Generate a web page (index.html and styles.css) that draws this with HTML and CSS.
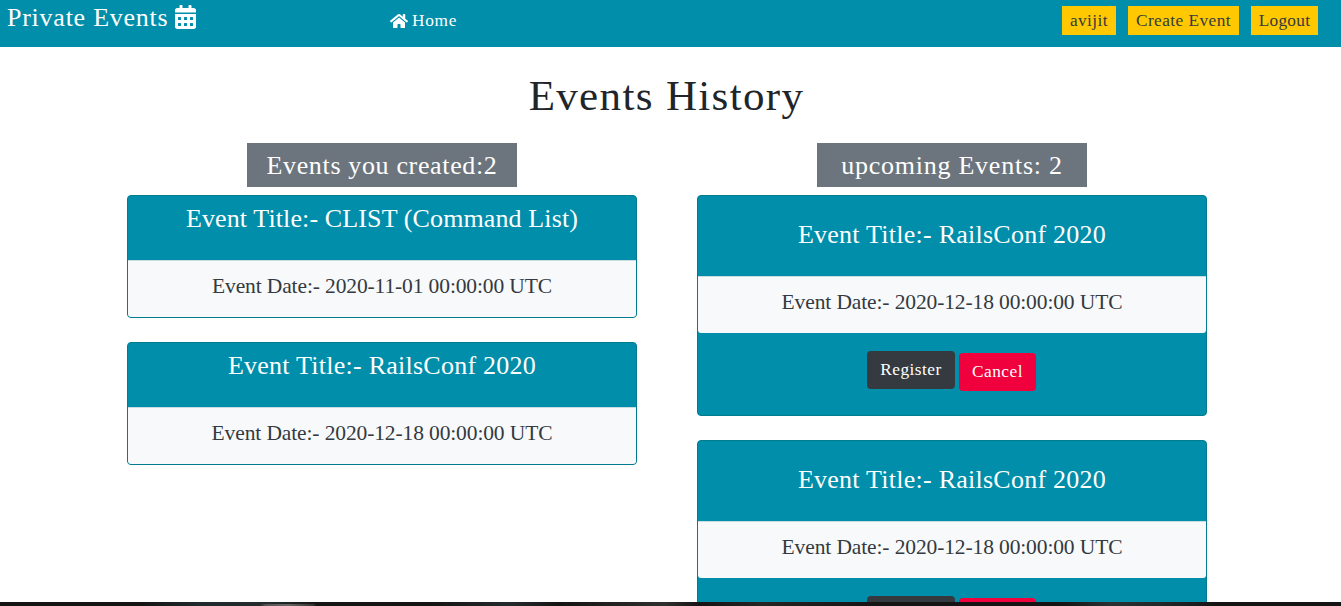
FILE: index.html
```html
<!DOCTYPE html>
<html lang="en">
<head>
<meta charset="utf-8">
<title>Private Events</title>
<link rel="stylesheet" href="styles.css">
</head>
<body>
<header class="navbar">
  <a class="brand"><span>Private Events</span>
    <svg class="calendar" viewBox="0 0 448 512"><path fill="currentColor" d="M0 464c0 26.500 21.500 48 48 48h352c26.500 0 48-21.500 48-48V192H0v272zm320-196c0-6.600 5.400-12 12-12h40c6.600 0 12 5.400 12 12v40c0 6.600-5.400 12-12 12h-40c-6.600 0-12-5.400-12-12v-40zm0 128c0-6.600 5.400-12 12-12h40c6.600 0 12 5.400 12 12v40c0 6.600-5.400 12-12 12h-40c-6.600 0-12-5.400-12-12v-40zM192 268c0-6.600 5.400-12 12-12h40c6.600 0 12 5.400 12 12v40c0 6.600-5.400 12-12 12h-40c-6.600 0-12-5.400-12-12v-40zm0 128c0-6.600 5.400-12 12-12h40c6.600 0 12 5.400 12 12v40c0 6.600-5.400 12-12 12h-40c-6.600 0-12-5.400-12-12v-40zM64 268c0-6.600 5.400-12 12-12h40c6.600 0 12 5.400 12 12v40c0 6.600-5.400 12-12 12H76c-6.600 0-12-5.400-12-12v-40zm0 128c0-6.600 5.400-12 12-12h40c6.600 0 12 5.400 12 12v40c0 6.600-5.400 12-12 12H76c-6.600 0-12-5.400-12-12v-40zM400 64h-48V16c0-8.800-7.200-16-16-16h-32c-8.800 0-16 7.200-16 16v48H160V16c0-8.800-7.200-16-16-16h-32c-8.800 0-16 7.200-16 16v48H48C21.500 64 0 85.500 0 112v48h448v-48c0-26.500-21.500-48-48-48z"/></svg>
  </a>
  <a class="home">
    <svg class="house" viewBox="0 0 576 512"><path fill="currentColor" d="M280.400 148.300L96 300.100V464a16 16 0 0 0 16 16l112.100-.300a16 16 0 0 0 15.900-16V368a16 16 0 0 1 16-16h64a16 16 0 0 1 16 16v95.600a16 16 0 0 0 16 16.100L464 480a16 16 0 0 0 16-16V300L295.700 148.300a12.200 12.200 0 0 0-15.300 0zM571.600 251.500L488 182.600V44.100a12 12 0 0 0-12-12h-56a12 12 0 0 0-12 12v72.600L318.500 43a48 48 0 0 0-61 0L4.300 251.500a12 12 0 0 0-1.600 16.900l25.500 31a12 12 0 0 0 16.900 1.600l235.200-193.700a12.200 12.200 0 0 1 15.300 0L530.900 301a12 12 0 0 0 16.900-1.600l25.500-31a12 12 0 0 0-1.700-16.900z"/></svg>
    <span>Home</span>
  </a>
  <nav class="actions">
    <a class="tag tag-user">avijit</a>
    <a class="tag tag-create">Create Event</a>
    <a class="tag tag-logout">Logout</a>
  </nav>
</header>
<main class="page">
  <h1 class="title">Events History</h1>
  <div class="columns">
    <section class="column">
      <h2 class="label label-created">Events you created:2</h2>
      <article class="card">
        <h3 class="card-title card-title-long">Event Title:- CLIST (Command List)</h3>
        <p class="card-date">Event Date:- 2020-11-01 00:00:00 UTC</p>
      </article>
      <article class="card">
        <h3 class="card-title">Event Title:- RailsConf 2020</h3>
        <p class="card-date">Event Date:- 2020-12-18 00:00:00 UTC</p>
      </article>
    </section>
    <section class="column">
      <h2 class="label label-upcoming">upcoming Events: 2</h2>
      <article class="card card-tall">
        <h3 class="card-title">Event Title:- RailsConf 2020</h3>
        <p class="card-date">Event Date:- 2020-12-18 00:00:00 UTC</p>
        <div class="card-actions"><a class="btn btn-register">Register</a><a class="btn btn-cancel">Cancel</a></div>
      </article>
      <article class="card card-tall">
        <h3 class="card-title">Event Title:- RailsConf 2020</h3>
        <p class="card-date">Event Date:- 2020-12-18 00:00:00 UTC</p>
        <div class="card-actions"><a class="btn btn-register">Register</a><a class="btn btn-cancel">Cancel</a></div>
      </article>
    </section>
  </div>
</main>
<footer class="desktop-edge"></footer>
</body>
</html>
```

FILE: styles.css
```css
* { box-sizing: border-box; }

body {
  margin: 0;
  height: 606px;
  overflow: hidden;
  display: flex;
  flex-direction: column;
  background: #fff;
  color: #212529;
  font-family: "Roboto Slab", "Liberation Serif", serif;
  font-size: 17.3px;
  font-weight: 300;
}

h1, h2, h3, p { margin: 0; font-weight: 300; white-space: nowrap; }

.navbar {
  flex: none;
  display: flex;
  align-items: flex-start;
  height: 47px;
  padding: 0 23px 0 7px;
  background: #008eaa;
  color: #fff;
}

.brand {
  display: flex;
  align-items: flex-start;
  width: 383px;
  font-size: 26px;
  line-height: 36px;
  letter-spacing: 0.75px;
}

.brand span { width: 168px; white-space: nowrap; }

.calendar { width: 21px; height: 24px; margin-top: 5px; }

.home {
  display: flex;
  gap: 4px;
  line-height: 24px;
  padding-top: 9px;
  letter-spacing: 0.75px;
}

.house { width: 18px; height: 16px; margin-top: 4px; }

.actions { display: flex; gap: 12px; margin-left: auto; padding-top: 6px; }

.tag {
  height: 29px;
  line-height: 30px;
  text-align: center;
  white-space: nowrap;
  background: #ffc800;
  color: #343a40;
}

.tag-user { width: 54px; letter-spacing: 0.45px; }
.tag-create { width: 111px; letter-spacing: 0.45px; }
.tag-logout { width: 67px; letter-spacing: 0.25px; }

.page { flex: 1; min-height: 0; overflow: hidden; }

.title {
  height: 96px;
  padding: 24px 8px 0 0;
  text-align: center;
  font-size: 43px;
  line-height: 50px;
  letter-spacing: 1.35px;
}

.columns { display: flex; gap: 60px; padding-left: 127px; }

.column { width: 510px; text-align: center; }

.label {
  width: 270px;
  height: 44px;
  margin: 0 auto 8px;
  background: #6c757d;
  color: #fff;
  font-size: 26px;
  line-height: 46px;
}

.label-created { letter-spacing: 0.65px; }
.label-upcoming { letter-spacing: 0.75px; }

.card {
  height: 123px;
  margin-bottom: 24px;
  border: 1px solid #007c8e;
  border-radius: 4px;
  background: #008eaa;
}

.card-title {
  height: 65px;
  border-bottom: 1px solid #c9dce1;
  color: #fff;
  font-size: 26px;
  line-height: 46px;
  letter-spacing: 0.25px;
}

.card-title-long { letter-spacing: 0.12px; }

.card-date {
  height: 56px;
  border-radius: 0 0 3px 3px;
  background: #f8f9fa;
  color: #343a40;
  font-size: 21.5px;
  line-height: 50px;
  letter-spacing: -0.12px;
}

.card-tall { height: 221px; }
.card-tall .card-title { height: 81px; line-height: 78px; }

.card-actions {
  display: flex;
  justify-content: center;
  align-items: flex-start;
  gap: 4px;
  padding: 18px 1px 0 0;
}

.btn {
  height: 38px;
  border-radius: 4px;
  color: #fff;
  line-height: 38px;
  letter-spacing: 0.5px;
}

.btn-register { width: 88px; background: #343a40; }
.btn-cancel { width: 77px; margin-top: 2px; background: #f0003c; }

.desktop-edge {
  flex: none;
  height: 4px;
  background:
    linear-gradient(90deg, transparent, #555 10%, #666 50%, #333 95%, transparent) 260px 2px / 56px 2px no-repeat,
    linear-gradient(90deg, #151313 0, #151313 140px, #202a2d 200px, #252b2c 270px, #171514 320px, #151313 430px, #252b2d 510px, #151313 560px, #302f2f 665px, #151313 700px, #252423 760px, #151313 880px, #151313 1060px, #2b3031 1110px, #22272a 1160px, #151313 1220px);
}
```
